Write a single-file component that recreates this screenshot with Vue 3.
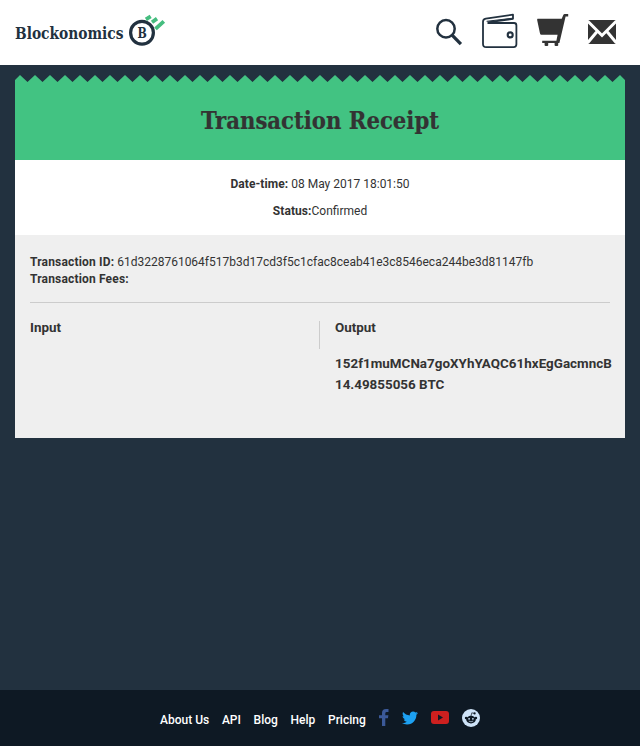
<script setup>
const teeth = Array.from({ length: 41 }, (_, i) => `${5 + i * 15},0 ${12.5 + i * 15},7`).join(' ')
const zigzag = `0,5 ${teeth.replace(/ [^ ]+$/, '')} 610,5 610,9 0,9`
const links = ['About Us', 'API', 'Blog', 'Help', 'Pricing']
</script>

<template>
  <div class="page">
    <header class="topbar">
      <a class="brand">
        <svg width="152" height="36" viewBox="0 0 152 36">
          <text class="slab" x="0" y="26.5" font-size="17" textLength="108.5" lengthAdjust="spacingAndGlyphs">Blockonomics</text>
          <circle cx="127" cy="20.7" r="11.4" fill="none" stroke="#22313f" stroke-width="3.2" />
          <text class="slab" x="122.5" y="26" font-size="14" textLength="9.3" lengthAdjust="spacingAndGlyphs">B</text>
          <g stroke="#45bd7f" stroke-width="3.8">
            <path d="M130.9 7.3 135.7 4.3M137 10.2 142 6.6M140.5 16.8 148.8 9.3" />
          </g>
        </svg>
      </a>
      <nav class="tools">
        <svg class="search" width="28" height="30" viewBox="0 0 28 30">
          <circle cx="10" cy="10.7" r="8.7" fill="none" stroke="#22313f" stroke-width="2.5" />
          <path d="m16.1 17.1 8.8 9" stroke="#22313f" stroke-width="3.3" />
        </svg>
        <svg class="wallet" width="36" height="36" viewBox="0 0 36 36" fill="none" stroke="#22313f" stroke-width="1.8" stroke-linejoin="round">
          <path d="M5.5 10h26.600q2.300 0 2.300 2.400v18.900q0 2.800-2.800 2.800H4.200q-3.200 0-3.200-3.200V8.800q0-2.700 2.800-3.200L31 1.700v4.100L5.500 9.400" />
          <path d="M4.600 8.300 30.800 5.200" stroke-width="1" />
          <circle cx="28.200" cy="21.900" r="2.500" stroke-width="2.100" />
        </svg>
        <svg class="cart" width="32" height="34" viewBox="0 0 32 34" fill="#333">
          <path d="M.5 4.7h24.2L26.3.9Q26.7 0 27.7 0h3.5v2.4h-2.6L22.4 28.9h-1.2v2.5q-1.8 1.4-3.6 0v-2.5h-6.4v2.5q-1.8 1.4-3.6 0v-2.5H5.2v-2.2h14.2l1.2-5.9H4.4Q3.3 20.5 3 19.4L.2 6.2Q0 4.7.5 4.7z" />
        </svg>
        <svg class="mail" width="28" height="24" viewBox="0 0 28 24">
          <path d="M0 0h28v24H0z" fill="#333" />
          <path d="m-.5 1 14.5 14.500L28.500 1M-.5 23l10-12M28.500 23l-10-12" fill="none" stroke="#fff" stroke-width="3" />
        </svg>
      </nav>
    </header>

    <main class="receipt">
      <svg class="zigzag" width="610" height="9" viewBox="0 0 610 9"><polygon :points="zigzag" fill="#42c382" /></svg>
      <div class="title">
        <svg width="260" height="40" viewBox="-10 0 260 40" role="heading">
          <text class="slab heading" x="1" y="25" font-size="24" textLength="238" lengthAdjust="spacingAndGlyphs">Transaction Receipt</text>
        </svg>
      </div>
      <section class="summary">
        <p><b>Date-time:</b> 08 May 2017 18:01:50</p>
        <p><b>Status:</b>Confirmed</p>
      </section>
      <section class="details">
        <div class="ids">
          <div><b>Transaction ID:</b> 61d3228761064f517b3d17cd3f5c1cfac8ceab41e3c8546eca244be3d81147fb</div>
          <div><b>Transaction Fees:</b></div>
        </div>
        <div class="flows">
          <div class="input"><h2>Input</h2></div>
          <div class="output">
            <h2>Output</h2>
            <div class="address">152f1muMCNa7goXYhYAQC61hxEgGacmncB</div>
            <div class="amount">14.49855056 BTC</div>
          </div>
        </div>
      </section>
    </main>

    <footer class="footer">
      <a v-for="link in links" :key="link">{{ link }}</a>
      <svg class="facebook" width="10" height="17" viewBox="0 0 10 17"><path d="M3 17V9.3H0V6.2h3V4.1Q3 0 7 0h2.5v3H7.7Q6.3 3 6.3 4.4v1.8h3.1l-.5 3.1H6.3V17z" fill="#3b5998" /></svg>
      <svg class="twitter" width="16" height="14" viewBox="0 1.5 24 21"><path fill="#1da1f2" d="M23.954 4.569c-.885.389-1.83.654-2.825.775 1.014-.611 1.794-1.574 2.163-2.723-.951.555-2.005.959-3.127 1.184-.896-.959-2.173-1.559-3.591-1.559-2.717 0-4.92 2.203-4.92 4.917 0 .39.045.765.127 1.124C7.691 8.094 4.066 6.13 1.64 3.161c-.427.722-.666 1.561-.666 2.475 0 1.71.87 3.213 2.188 4.096-.807-.026-1.566-.248-2.228-.616v.061c0 2.385 1.693 4.374 3.946 4.827-.413.111-.849.171-1.296.171-.314 0-.615-.03-.916-.086.631 1.953 2.445 3.377 4.604 3.417-1.68 1.319-3.809 2.105-6.102 2.105-.39 0-.779-.023-1.17-.067 2.189 1.394 4.768 2.209 7.557 2.209 9.054 0 13.999-7.496 13.999-13.986 0-.209 0-.42-.015-.63.961-.689 1.8-1.56 2.46-2.548z" /></svg>
      <svg class="youtube" width="18" height="13" viewBox="0 0 18 13"><rect width="18" height="13" rx="3" fill="#cd201f" /><path d="m7 3.6 5 2.9-5 2.9z" fill="#0e1924" /></svg>
      <svg class="reddit" width="18" height="18" viewBox="0 0 18 18">
        <circle cx="9" cy="9" r="9" fill="#cee3f8" />
        <g fill="#0e1924"><ellipse cx="9" cy="10.6" rx="4.8" ry="3.8" /><circle cx="4.1" cy="9" r="1.3" /><circle cx="13.9" cy="9" r="1.3" /><circle cx="12.6" cy="4.4" r="1.1" /></g>
        <path d="m9 7 .8-3.2 2.4.6" fill="none" stroke="#0e1924" stroke-width=".7" />
        <g fill="#cee3f8"><circle cx="7.1" cy="9.8" r=".9" /><circle cx="10.9" cy="9.8" r=".9" /></g>
        <path d="M6.8 12.1q2.2 1.4 4.4 0" fill="none" stroke="#cee3f8" stroke-width=".7" />
      </svg>
    </footer>
  </div>
</template>

<style>
body { background: #22313f; }
</style>

<style scoped>
* { box-sizing: border-box; }
.page { display: flex; flex-direction: column; height: 746px; overflow: hidden; background: #22313f; color: #333; font: 12px/17px Roboto, "Liberation Sans", sans-serif; }
svg { display: block; flex: none; }
.slab { font-family: "Roboto Slab", "DejaVu Serif Condensed", "DejaVu Serif", serif; font-weight: 700; fill: #22313f; }
.slab.heading { fill: #333; stroke: #333; stroke-width: .2px; }
.topbar { display: flex; justify-content: space-between; height: 65px; padding: 12px 24px 0 15px; background: #fff; }
.tools { display: flex; align-items: flex-start; }
.search { margin: 6px 18px 0 0; }
.wallet { margin: 1px 19px 0 0; }
.cart { margin: 2px 19px 0 0; }
.mail { margin-top: 8px; }
.receipt { width: 610px; margin: 10px 15px 0; }
.title { height: 76px; display: flex; justify-content: center; padding-top: 20px; background: #42c382; }
.summary { height: 75px; padding-top: 16px; background: #fff; text-align: center; }
.summary p { margin: 0 0 10px; }
.summary b { letter-spacing: .08px; }
.details { height: 203px; padding: 18px 15px 0; background: #efefef; }
.ids { height: 50px; padding-top: 1px; border-bottom: 1px solid #ccc; }
.ids b { letter-spacing: .17px; }
.flows { display: grid; grid-template-columns: 290px 1fr; padding-top: 18px; }
.input { height: 28px; border-right: 1px solid #ccc; }
.output { padding-left: 15px; }
h2 { margin: 0; font-size: 13.4px; line-height: 14px; font-weight: 700; }
.address, .amount { font-size: 13.4px; line-height: 21px; font-weight: 700; white-space: nowrap; }
.address { margin-top: 18px; letter-spacing: .03px; }
.footer { display: flex; align-items: flex-start; height: 56px; margin-top: auto; padding: 22px 0 0 160px; background: #0e1924; color: #fff; font-weight: 500; }
.footer a { margin-right: 12.7px; white-space: nowrap; }
.facebook { margin: -3px 13px 0 .8px; }
.twitter { margin: -1px 13px 0 0; }
.youtube { margin: -1px 13px 0 0; }
.reddit { margin-top: -3px; }
</style>
